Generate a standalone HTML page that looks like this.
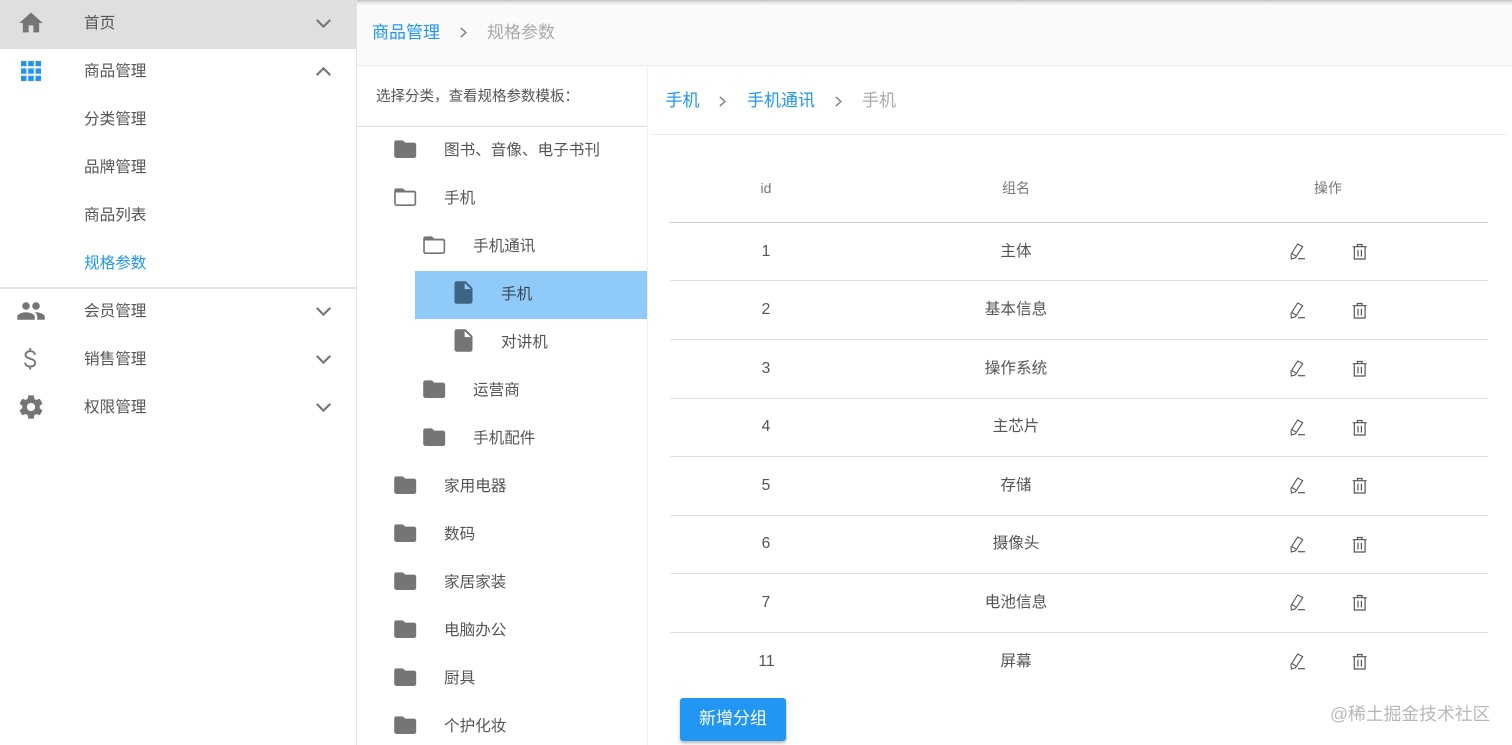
<!DOCTYPE html>
<html lang="zh"><head><meta charset="utf-8"><title>规格参数</title>
<style>
html,body{margin:0;padding:0;width:1512px;height:745px;overflow:hidden;background:#fff}
body{position:relative;font-family:"Liberation Sans","Noto Sans CJK SC",sans-serif;font-size:15.6px;color:#555}
.a,.t,.c,svg{position:absolute}
.t{white-space:nowrap;line-height:24px;height:24px}
.c{white-space:nowrap;line-height:24px;height:24px;width:200px;text-align:center}
.l{position:absolute;height:1px;background:#e0e0e0}
</style></head><body>
<svg width="0" height="0" style="position:absolute"><defs>
<symbol id="fo" viewBox="0 0 24 24"><path fill="#757575" d="M10 4H4c-1.100 0-2 .9-2 2v12c0 1.100.9 2 2 2h16c1.100 0 2-.9 2-2V8c0-1.100-.9-2-2-2h-8l-2-2z"/></symbol>
<symbol id="op" viewBox="0 0 24 24"><path fill="#757575" d="M20 6h-8l-2-2H4c-1.100 0-2 .9-2 2v12c0 1.100.9 2 2 2h16c1.100 0 2-.9 2-2V8c0-1.100-.9-2-2-2zm0 12.500H4a.5.500 0 0 1-.5-.5V7.700h16.500a.5.500 0 0 1 .5.500V18a.5.500 0 0 1-.5.500z"/></symbol>
<symbol id="fi" viewBox="0 0 24 24"><path d="M6 2c-1.100 0-2 .9-2 2v16c0 1.100.9 2 2 2h12c1.100 0 2-.9 2-2V8l-6-6H6zm7 7V3.500L18.500 9H13z"/></symbol>
<symbol id="dn" viewBox="0 0 24 24"><path fill="none" stroke="#757575" stroke-width="2" d="M5.500 8.500 12 15l6.500-6.500"/></symbol>
<symbol id="up" viewBox="0 0 24 24"><path fill="none" stroke="#757575" stroke-width="2" d="M5.500 15.500 12 9l6.500 6.500"/></symbol>
<symbol id="pe" viewBox="0 0 20 20"><g fill="none" stroke="#555" stroke-width="1.100"><path d="M9.700 2 14.700 4.700 7.500 15.800 3.300 17 3 12.500z"/><path d="M3.800 11.500l4.700 2.800"/></g><path stroke="#555" stroke-width="1.200" d="M10 16.700H17"/></symbol>
<symbol id="tr" viewBox="0 0 20 20"><g fill="none" stroke="#555" stroke-width="1.200"><path d="M2.700 4.700h14M7.400 4.700V2.500h4.600v2.200M4.300 4.700v12.300h10.800V4.700M8 7.800v6.700M11.400 7.800v6.700"/></g></symbol>
<symbol id="ch" viewBox="0 0 12 12"><path fill="none" stroke="#777" stroke-width="1.200" d="M3.500 1.700 8.200 6l-4.700 4.300"/></symbol>
</defs></svg>

<!-- sidebar -->
<div class="a" style="left:0;top:0;width:356px;height:49px;background:#dfdfdf"></div>
<div class="a" style="left:356px;top:0;width:1px;height:745px;background:#e4e4e4"></div>
<div class="a" style="left:0;top:287px;width:356px;height:2px;background:#e2e2e2"></div>

<svg style="left:17px;top:9px" width="28" height="28" viewBox="0 0 24 24"><path fill="#757575" d="M10 20v-6h4v6h5v-8h3L12 3 2 12h3v8z"/></svg>
<svg style="left:19px;top:59px" width="24" height="24" viewBox="0 0 24 24"><path fill="#2196f3" d="M2 2h5.500v5.300H2zM9.200 2h5.600v5.300H9.200zM16.500 2H22v5.300h-5.500zM2 9.400h5.500v5.300H2zM9.200 9.400h5.600v5.300H9.200zM16.500 9.400H22v5.300h-5.500zM2 16.700h5.500V22H2zM9.200 16.700h5.600V22H9.200zM16.500 16.700H22V22h-5.500z"/></svg>
<svg style="left:16px;top:296px" width="30" height="30" viewBox="0 0 24 24"><path fill="#757575" d="M16 11c1.660 0 2.990-1.340 2.990-3S17.660 5 16 5s-3 1.340-3 3 1.340 3 3 3zm-8 0c1.660 0 2.990-1.340 2.990-3S9.660 5 8 5 5 6.340 5 8s1.340 3 3 3zm0 2c-2.330 0-7 1.170-7 3.500V19h14v-2.500C15 14.170 10.330 13 8 13zm8 0c-.29 0-.62.020-.97.050 1.160.84 1.970 1.970 1.970 3.450V19h6v-2.500c0-2.330-4.670-3.500-7-3.500z"/></svg>
<svg style="left:24px;top:348px" width="13" height="22" viewBox="0 0 13 22"><path fill="none" stroke="#757575" stroke-width="1.900" d="M11 6.800C10.800 4.700 9 3.200 6.200 3.200 3.400 3.200 1.500 4.700 1.500 6.800c0 2.300 2 3.300 4.700 3.900 2.900.7 5 1.700 5 4.200 0 2.200-2.100 3.700-5 3.700-3 0-4.900-1.500-5.200-3.800M6.200 0v3.200M6.200 18.600v2.900"/></svg>
<svg style="left:17px;top:393px" width="28" height="28" viewBox="0 0 24 24"><path fill="#757575" d="M19.430 12.980c.04-.32.07-.64.07-.98s-.03-.66-.07-.98l2.110-1.650c.19-.15.240-.42.120-.64l-2-3.460c-.12-.22-.39-.3-.61-.22l-2.490 1c-.52-.4-1.080-.73-1.690-.98l-.38-2.650C14.460 2.180 14.250 2 14 2h-4c-.25 0-.46.180-.49.420l-.38 2.650c-.61.250-1.170.59-1.690.98l-2.490-1c-.23-.09-.49 0-.61.220l-2 3.460c-.13.220-.07.490.12.640l2.110 1.650c-.04.320-.07.650-.07.980s.03.660.07.980l-2.110 1.650c-.19.150-.24.420-.12.640l2 3.460c.12.220.39.300.61.220l2.490-1c.52.400 1.080.730 1.690.980l.38 2.650c.03.240.24.420.49.420h4c.25 0 .46-.18.490-.42l.38-2.650c.61-.25 1.170-.59 1.690-.98l2.490 1c.23.090.49 0 .61-.22l2-3.460c.12-.22.07-.49-.12-.64l-2.110-1.650zM12 15.500c-1.930 0-3.500-1.570-3.500-3.500s1.570-3.500 3.500-3.500 3.500 1.570 3.500 3.500-1.570 3.500-3.500 3.500z"/></svg>

<div class="t" style="left:84px;top:12px">首页</div>
<div class="t" style="left:84px;top:60px">商品管理</div>
<div class="t" style="left:84px;top:108px">分类管理</div>
<div class="t" style="left:84px;top:156px">品牌管理</div>
<div class="t" style="left:84px;top:204px">商品列表</div>
<div class="t" style="left:84px;top:252px;color:#2196f3">规格参数</div>
<div class="t" style="left:84px;top:300px">会员管理</div>
<div class="t" style="left:84px;top:348px">销售管理</div>
<div class="t" style="left:84px;top:396px">权限管理</div>
<svg style="left:311px;top:11px" width="25" height="25"><use href="#dn"/></svg>
<svg style="left:311px;top:59px" width="25" height="25"><use href="#up"/></svg>
<svg style="left:311px;top:299px" width="25" height="25"><use href="#dn"/></svg>
<svg style="left:311px;top:347px" width="25" height="25"><use href="#dn"/></svg>
<svg style="left:311px;top:395px" width="25" height="25"><use href="#dn"/></svg>

<!-- top breadcrumb -->
<div class="a" style="left:357px;top:0;width:1155px;height:66px;background:#fafafa;border-bottom:1px solid #eee;box-sizing:border-box"></div>
<div class="a" style="left:357px;top:0;width:1155px;height:6px;background:linear-gradient(#c0c0c0,#ececec 50%,#fafafa)"></div>
<div class="t" style="left:372px;top:21px;font-size:17px;color:#2196f3">商品管理</div>
<svg style="left:457px;top:26px" width="13" height="13"><use href="#ch"/></svg>
<div class="t" style="left:487px;top:21px;font-size:17px;color:#aaa">规格参数</div>

<!-- tree panel -->
<div class="a" style="left:647px;top:66px;width:1px;height:679px;background:#f0f0f0"></div>
<div class="l" style="left:357px;top:126px;width:290px;background:#ddd"></div>
<div class="t" style="left:376px;top:85px;font-size:14.500px;color:#555">选择分类，查看规格参数模板：</div>
<div class="a" style="left:415px;top:271px;width:232px;height:48px;background:#90caf9"></div>

<svg style="left:392.300px;top:135.800px" width="26.400" height="26.400"><use href="#fo"/></svg><div class="t" style="left:444px;top:139px">图书、音像、电子书刊</div>
<svg style="left:392.300px;top:183.800px" width="26.400" height="26.400"><use href="#op"/></svg><div class="t" style="left:444px;top:187px">手机</div>
<svg style="left:421.300px;top:231.800px" width="26.400" height="26.400"><use href="#op"/></svg><div class="t" style="left:473px;top:235px">手机通讯</div>
<svg style="left:449.500px;top:279px;fill:#3d6485" width="27" height="27"><use href="#fi"/></svg><div class="t" style="left:501px;top:283px;color:#37474f">手机</div>
<svg style="left:449.500px;top:327px;fill:#757575" width="27" height="27"><use href="#fi"/></svg><div class="t" style="left:501px;top:331px">对讲机</div>
<svg style="left:421.300px;top:375.800px" width="26.400" height="26.400"><use href="#fo"/></svg><div class="t" style="left:473px;top:379px">运营商</div>
<svg style="left:421.300px;top:423.800px" width="26.400" height="26.400"><use href="#fo"/></svg><div class="t" style="left:473px;top:427px">手机配件</div>
<svg style="left:392.300px;top:471.800px" width="26.400" height="26.400"><use href="#fo"/></svg><div class="t" style="left:444px;top:475px">家用电器</div>
<svg style="left:392.300px;top:519.800px" width="26.400" height="26.400"><use href="#fo"/></svg><div class="t" style="left:444px;top:523px">数码</div>
<svg style="left:392.300px;top:567.800px" width="26.400" height="26.400"><use href="#fo"/></svg><div class="t" style="left:444px;top:571px">家居家装</div>
<svg style="left:392.300px;top:615.800px" width="26.400" height="26.400"><use href="#fo"/></svg><div class="t" style="left:444px;top:619px">电脑办公</div>
<svg style="left:392.300px;top:663.800px" width="26.400" height="26.400"><use href="#fo"/></svg><div class="t" style="left:444px;top:667px">厨具</div>
<svg style="left:392.300px;top:711.800px" width="26.400" height="26.400"><use href="#fo"/></svg><div class="t" style="left:444px;top:715px">个护化妆</div>

<!-- right breadcrumb -->
<div class="t" style="left:665.500px;top:89px;font-size:17px;color:#2196f3">手机</div>
<svg style="left:716px;top:95px" width="13" height="13"><use href="#ch"/></svg>
<div class="t" style="left:747px;top:89px;font-size:17px;color:#2196f3">手机通讯</div>
<svg style="left:832px;top:95px" width="13" height="13"><use href="#ch"/></svg>
<div class="t" style="left:862px;top:89px;font-size:17px;color:#aaa">手机</div>
<div class="l" style="left:652px;top:134px;width:855px;background:#e8e8e8"></div>

<!-- table -->
<div class="c" style="left:666px;top:176px;font-size:14px;color:#777">id</div>
<div class="c" style="left:916px;top:176px;font-size:14px;color:#777">组名</div>
<div class="c" style="left:1228px;top:176px;font-size:14px;color:#777">操作</div>
<div class="l" style="left:670px;top:222px;width:818px;background:#c8c8c8"></div>
<div class="l" style="left:670px;top:280px;width:818px"></div>
<div class="l" style="left:670px;top:339px;width:818px"></div>
<div class="l" style="left:670px;top:398px;width:818px"></div>
<div class="l" style="left:670px;top:456px;width:818px"></div>
<div class="l" style="left:670px;top:515px;width:818px"></div>
<div class="l" style="left:670px;top:573px;width:818px"></div>
<div class="l" style="left:670px;top:632px;width:818px"></div>

<div class="c" style="left:666px;top:240px">1</div><div class="c" style="left:916px;top:240px">主体</div>
<div class="c" style="left:666px;top:298px">2</div><div class="c" style="left:916px;top:298px">基本信息</div>
<div class="c" style="left:666px;top:357px">3</div><div class="c" style="left:916px;top:357px">操作系统</div>
<div class="c" style="left:666px;top:415px">4</div><div class="c" style="left:916px;top:415px">主芯片</div>
<div class="c" style="left:666px;top:474px">5</div><div class="c" style="left:916px;top:474px">存储</div>
<div class="c" style="left:666px;top:532px">6</div><div class="c" style="left:916px;top:532px">摄像头</div>
<div class="c" style="left:666px;top:591px">7</div><div class="c" style="left:916px;top:591px">电池信息</div>
<div class="c" style="left:666.500px;top:650px">11</div><div class="c" style="left:916px;top:650px">屏幕</div>

<svg style="left:1288px;top:242px" width="20" height="20"><use href="#pe"/></svg><svg style="left:1350px;top:242px" width="20" height="20"><use href="#tr"/></svg>
<svg style="left:1288px;top:301px" width="20" height="20"><use href="#pe"/></svg><svg style="left:1350px;top:301px" width="20" height="20"><use href="#tr"/></svg>
<svg style="left:1288px;top:359px" width="20" height="20"><use href="#pe"/></svg><svg style="left:1350px;top:359px" width="20" height="20"><use href="#tr"/></svg>
<svg style="left:1288px;top:418px" width="20" height="20"><use href="#pe"/></svg><svg style="left:1350px;top:418px" width="20" height="20"><use href="#tr"/></svg>
<svg style="left:1288px;top:476px" width="20" height="20"><use href="#pe"/></svg><svg style="left:1350px;top:476px" width="20" height="20"><use href="#tr"/></svg>
<svg style="left:1288px;top:535px" width="20" height="20"><use href="#pe"/></svg><svg style="left:1350px;top:535px" width="20" height="20"><use href="#tr"/></svg>
<svg style="left:1288px;top:593px" width="20" height="20"><use href="#pe"/></svg><svg style="left:1350px;top:593px" width="20" height="20"><use href="#tr"/></svg>
<svg style="left:1288px;top:652px" width="20" height="20"><use href="#pe"/></svg><svg style="left:1350px;top:652px" width="20" height="20"><use href="#tr"/></svg>

<div class="a" style="left:680px;top:698px;width:106px;height:43px;line-height:42px;background:#2196f3;color:#fff;text-align:center;border-radius:3px;font-size:17px;box-shadow:0 2px 3px rgba(0,0,0,.3)">新增分组</div>
<div class="t" style="left:1330px;top:702px;font-size:17.800px;color:#b8b8b8">@稀土掘金技术社区</div>
</body></html>
